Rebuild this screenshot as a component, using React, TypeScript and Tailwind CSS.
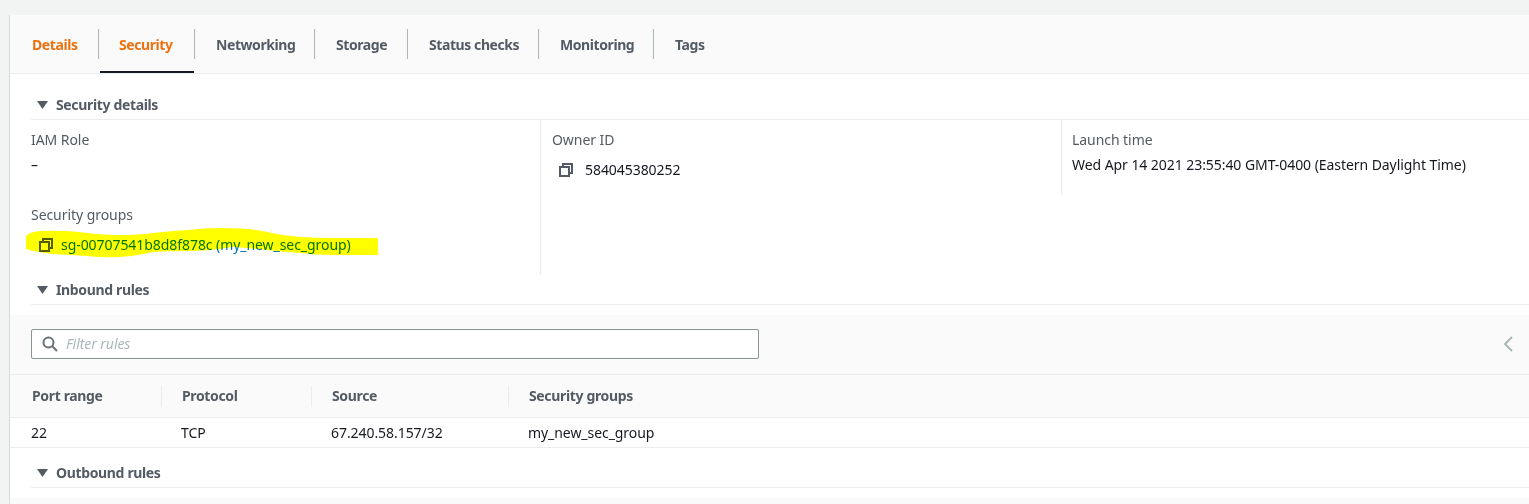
const tabs = [
  { label: "Details", width: "w-[89px]", pad: "pl-[22px]", active: false, orange: true },
  { label: "Security", width: "w-[96px]", pad: "pl-[20px]", active: true, orange: true },
  { label: "Networking", width: "w-[120px]", pad: "pl-[21px]", active: false, orange: false },
  { label: "Storage", width: "w-[93px]", pad: "pl-[21px]", active: false, orange: false },
  { label: "Status checks", width: "w-[131px]", pad: "pl-[21px]", active: false, orange: false },
  { label: "Monitoring", width: "w-[115px]", pad: "pl-[21px]", active: false, orange: false },
  { label: "Tags", width: "w-[80px]", pad: "pl-[21px]", active: false, orange: false },
];

const columns = [
  { label: "Port range", value: "22", width: "w-[150px]", sep: "left-[129px]" },
  { label: "Protocol", value: "TCP", width: "w-[150px]", sep: "left-[129px]" },
  { label: "Source", value: "67.240.58.157/32", width: "w-[197px]", sep: "left-[176px]" },
  { label: "Security groups", value: "my_new_sec_group", width: "w-[300px]", sep: "hidden" },
];

const CopyIcon = () => (
  <svg viewBox="0 0 14 14" className="w-[14px] h-[14px] shrink-0" fill="none" stroke="#545b64" strokeWidth="2">
    <rect x="1" y="4" width="9" height="9" />
    <path d="M4 4V1h9v9h-3" />
  </svg>
);

const SectionHeader = ({ title, className }: { title: string; className: string }) => (
  <div className={`flex items-center border-b border-[#eaeded] ${className}`}>
    <svg viewBox="0 0 11 8" className="w-[11px] h-[8px] ml-[6px] mr-[8px]">
      <polygon points="0,0 11,0 5.5,8" fill="#545b64" />
    </svg>
    <span className="font-bold text-[#545b64] tracking-[-0.35px]">{title}</span>
  </div>
);

export default function App() {
  return (
    <div className="w-[1529px] h-[504px] overflow-hidden bg-[#f2f3f3] pt-[15px] pl-[9px] text-[14px] tracking-[-0.06px] text-[#16191f] font-['Noto_Sans',sans-serif]">
      <div className="h-[489px] bg-white border-l border-[#d5dbdb]">
        <div className="flex h-[59px] bg-[#fafafa] border-b border-[#eaeded]">
          {tabs.map((tab, i) => (
            <div
              key={tab.label}
              className={`relative flex items-center h-[58px] font-bold tracking-[-0.42px] ${tab.pad} ${tab.width} ${tab.orange ? "text-[#ec7211]" : "text-[#545b64]"}`}
            >
              {tab.label}
              {i < tabs.length - 1 && <div className="absolute right-0 top-[14px] w-px h-[30px] bg-[#aab7b8]" />}
              {tab.active && <div className="absolute left-[1px] right-[1px] bottom-0 h-[2px] bg-[#16191f]" />}
            </div>
          ))}
        </div>

        <div className="pl-[21px]">
          <SectionHeader title="Security details" className="h-[46px] pt-[16px]" />
          <div className="flex h-[155px]">
            <div className="w-[510px] border-r border-[#eaeded] pt-[10px]">
              <div className="leading-[19px] text-[#545b64]">IAM Role</div>
              <div className="mt-[6px] leading-[19px]">–</div>
              <div className="mt-[31px] leading-[19px] text-[#545b64]">Security groups</div>
              <div className="relative flex items-center gap-[8px] mt-[11px] pl-[8px] h-[19px] text-[#0073bb]">
                <CopyIcon />
                <span>sg-00707541b8d8f878c (my_new_sec_group)</span>
                {/* marker scribble over the text */}
                <svg viewBox="0 0 352 32" className="absolute left-[-5px] top-[-7px] w-[352px] h-[32px] mix-blend-multiply">
                  <path
                    d="M0 21 L0 8 Q3 4 14 3 Q40 2 61 5 Q80 7 94 7 Q112 7 127 5 Q145 3 161 2 Q180 0 194 0 Q225 0 241 4 Q258 8 274 9 Q290 10 307 10 L352 10 L352 27 L307 27 Q290 27 274 25 Q258 24 241 22 Q222 20 207 19 Q198 20 194 21 Q178 23 161 23 Q142 23 127 24 Q110 28 94 29 Q76 30 61 28 Q44 27 27 26 Q10 24 0 21 Z"
                    fill="#ffff00"
                  />
                </svg>
              </div>
            </div>
            <div className="w-[520px] pl-[11px] pt-[10px]">
              <div className="leading-[19px] text-[#545b64]">Owner ID</div>
              <div className="flex items-center gap-[12px] mt-[11px] pl-[7px] h-[19px]">
                <CopyIcon />
                <span>584045380252</span>
              </div>
            </div>
            <div className="flex-1 h-[75px] border-l border-[#eaeded] pl-[10px] pt-[10px]">
              <div className="leading-[19px] text-[#545b64]">Launch time</div>
              <div className="mt-[6px] leading-[19px]">Wed Apr 14 2021 23:55:40 GMT-0400 (Eastern Daylight Time)</div>
            </div>
          </div>
          <SectionHeader title="Inbound rules" className="h-[30px]" />
        </div>

        <div className="h-[10px]" />
        <div className="flex items-center justify-between h-[60px] bg-[#fafafa] border-b border-[#eaeded] pb-[2px] pl-[21px] pr-[16px]">
          <div className="flex items-center w-[728px] h-[30px] bg-white border border-[#879596] rounded-[2px] pl-[10px]">
            <svg viewBox="0 0 16 16" className="w-[16px] h-[16px]" fill="none" stroke="#687078" strokeWidth="2">
              <circle cx="6.5" cy="6.5" r="5" />
              <path d="M10.5 10.5 15 15" />
            </svg>
            <span className="ml-[8px] italic text-[#aab7b8]">Filter rules</span>
          </div>
          <svg viewBox="0 0 10 16" className="w-[10px] h-[16px]" fill="none" stroke="#aab7b8" strokeWidth="2">
            <path d="M9 1 2 8l7 7" />
          </svg>
        </div>

        <div className="flex h-[43px] bg-[#fafafa] border-b border-[#eaeded] pb-[2px] pl-[22px]">
          {columns.map((col) => (
            <div key={col.label} className={`relative flex items-center font-bold tracking-[-0.35px] text-[#545b64] ${col.width}`}>
              {col.label}
              <div className={`absolute top-[11px] w-px h-[21px] bg-[#eaeded] ${col.sep}`} />
            </div>
          ))}
        </div>

        <div className="flex h-[30px] border-b border-[#eaeded] pl-[21px]">
          {columns.map((col) => (
            <div key={col.label} className={`flex items-center ${col.width}`}>
              {col.value}
            </div>
          ))}
        </div>

        <div className="pl-[21px]">
          <SectionHeader title="Outbound rules" className="h-[40px] pt-[10px]" />
        </div>
        <div className="h-[10px]" />
        <div className="h-[20px] bg-[#fafafa]" />
      </div>
    </div>
  );
}
